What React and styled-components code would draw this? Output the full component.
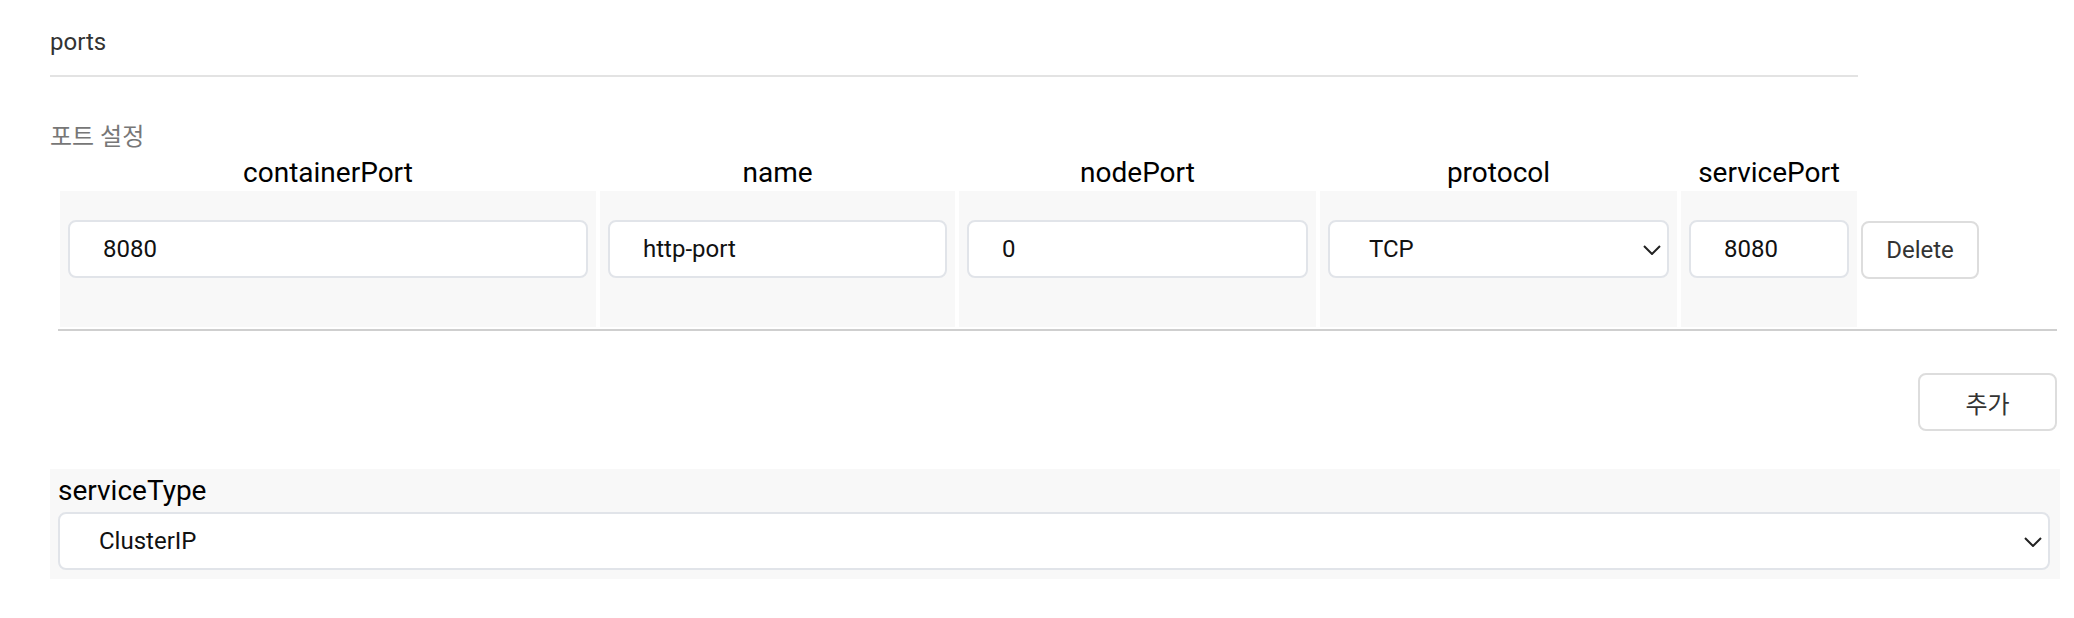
import React from "react";
import styled, { createGlobalStyle } from "styled-components";

const GlobalStyle = createGlobalStyle`
  * { box-sizing: border-box; }
  body {
    margin: 0;
    background: #ffffff;
    font-family: Roboto, "Noto Sans CJK KR", sans-serif;
  }
`;

const ports = [
  { containerPort: "8080", name: "http-port", nodePort: "0", protocol: "TCP", servicePort: "8080" },
];

const columns = [
  { key: "containerPort", width: 536 },
  { key: "name", width: 355 },
  { key: "nodePort", width: 357 },
  { key: "protocol", width: 357, select: ["TCP", "UDP", "SCTP"] },
  { key: "servicePort", width: 176 },
];

const Page = styled.div`
  padding: 28px 14px 40px 50px;
`;

const TitleBar = styled.div`
  max-width: 1808px;
  font-size: 24px;
  line-height: 28px;
  color: #333333;
  padding-bottom: 19px;
  border-bottom: 2px solid #e3e3e3;
`;

const SectionLabel = styled.div`
  margin-top: 46px;
  font-size: 24px;
  line-height: 28px;
  color: #777777;
`;

const PortsBlock = styled.div`
  margin: 0 3px 0 8px;
`;

const TableWrap = styled.div`
  padding-bottom: 2px;
  border-bottom: 2px solid #cfcfcf;
`;

const PortTable = styled.table`
  width: calc(100% + 4px);
  margin: 6px -2px 0;
  table-layout: fixed;
  border-collapse: separate;
  border-spacing: 4px 0;
`;

const HeadCell = styled.th`
  font-family: Roboto, sans-serif;
  font-size: 28px;
  font-weight: normal;
  line-height: 32px;
  color: #000000;
  text-align: center;
  padding: 0 0 2px;
`;

const Cell = styled.td`
  vertical-align: top;
  padding: ${(p) => (p.$action ? "30px 0 0" : "29px 8px 49px")};
  background: ${(p) => (p.$action ? "transparent" : "#f8f8f8")};
`;

const TextInput = styled.input`
  display: block;
  width: 100%;
  height: 58px;
  padding: 0 12px 0 33px;
  border: 2px solid #e1e4e9;
  border-radius: 8px;
  background: #ffffff;
  font-family: Roboto, sans-serif;
  font-size: 24px;
  color: #111111;
  outline: none;
`;

const SelectWrap = styled.div`
  position: relative;
  width: 100%;
`;

const Select = styled.select`
  display: block;
  width: 100%;
  height: 58px;
  padding: 0 40px 0 39px;
  border: 2px solid #e1e4e9;
  border-radius: 8px;
  background: #ffffff;
  font-family: Roboto, sans-serif;
  font-size: 24px;
  color: #111111;
  appearance: none;
  -webkit-appearance: none;
  outline: none;
`;

const Chevron = styled.svg`
  position: absolute;
  right: 8px;
  top: 50%;
  width: 18px;
  height: 10px;
  margin-top: -4px;
  pointer-events: none;
`;

const Button = styled.button`
  height: 58px;
  padding: 0;
  width: ${(p) => p.$w}px;
  border: 2px solid #dddddd;
  border-radius: 8px;
  background: #ffffff;
  font-family: Roboto, "Noto Sans CJK KR", sans-serif;
  font-size: 24px;
  color: #333333;
  cursor: pointer;
`;

const AddRow = styled.div`
  display: flex;
  justify-content: flex-end;
  margin-top: 42px;
`;

const ServiceTypeBox = styled.div`
  margin-top: 38px;
  padding: 6px 10px 9px 8px;
  background: #f8f8f8;
`;

const FieldLabel = styled.div`
  font-family: Roboto, sans-serif;
  font-size: 28px;
  line-height: 32px;
  color: #000000;
  margin-bottom: 5px;
`;

function Dropdown({ value, options }) {
  return (
    <SelectWrap>
      <Select defaultValue={value}>
        {options.map((o) => (
          <option key={o}>{o}</option>
        ))}
      </Select>
      <Chevron viewBox="0 0 18 10">
        <path d="M1 1 L9 9 L17 1" fill="none" stroke="#222" strokeWidth="2" />
      </Chevron>
    </SelectWrap>
  );
}

export default function App() {
  return (
    <Page>
      <GlobalStyle />
      <TitleBar>ports</TitleBar>
      <SectionLabel>포트 설정</SectionLabel>
      <PortsBlock>
        <TableWrap>
          <PortTable>
            <thead>
              <tr>
                {columns.map((c) => (
                  <HeadCell key={c.key} style={{ width: c.width }}>
                    {c.key}
                  </HeadCell>
                ))}
                <HeadCell />
              </tr>
            </thead>
            <tbody>
              {ports.map((row, i) => (
                <tr key={i}>
                  {columns.map((c) => (
                    <Cell key={c.key}>
                      {c.select ? (
                        <Dropdown value={row[c.key]} options={c.select} />
                      ) : (
                        <TextInput defaultValue={row[c.key]} />
                      )}
                    </Cell>
                  ))}
                  <Cell $action>
                    <Button $w={118}>Delete</Button>
                  </Cell>
                </tr>
              ))}
            </tbody>
          </PortTable>
        </TableWrap>
        <AddRow>
          <Button $w={139}>추가</Button>
        </AddRow>
      </PortsBlock>
      <ServiceTypeBox>
        <FieldLabel>serviceType</FieldLabel>
        <Dropdown value="ClusterIP" options={["ClusterIP", "NodePort", "LoadBalancer"]} />
      </ServiceTypeBox>
    </Page>
  );
}
